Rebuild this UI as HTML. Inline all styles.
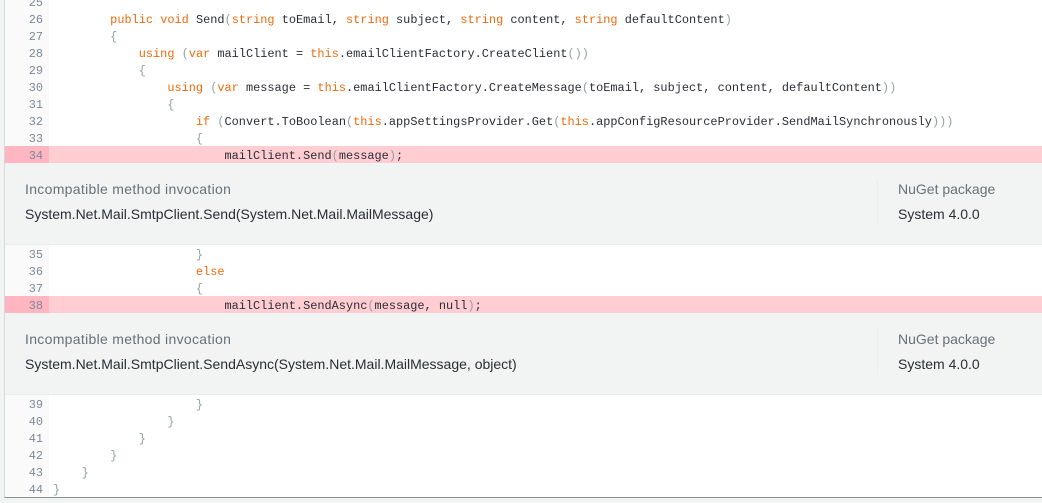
<!DOCTYPE html>
<html><head><meta charset="utf-8"><style>
html,body{margin:0;padding:0;width:1042px;height:503px;overflow:hidden;background:#f2f3f3}
#c{position:absolute;left:4px;top:0;width:1038px;height:497px;background:#fff;border-left:1px solid #d5dbdb;border-bottom:1px solid #879596;box-sizing:content-box}
#g{position:absolute;left:5px;top:0;width:44px;height:497px;background:#fafafa}
.l{position:absolute;left:5px;width:1037px;height:17px;font:11.915px/21px "Liberation Mono",monospace;color:#2a2e33;white-space:pre;overflow:hidden}
.l i{font-style:normal;position:absolute;left:0;top:0;width:38px;height:17px;text-align:right;color:#7d8998}
.l span{position:absolute;left:48px;top:0}
.p{background:#ffcdd2}
.p i{background:#ffb6c0;width:44px;padding-right:6px;box-sizing:border-box;height:17px}
b{font-weight:normal;color:#ec6a0c}
u{text-decoration:none;color:#95a1a2}
.b{position:absolute;left:5px;width:1037px;height:82px;background:#f2f3f3;border-bottom:1px solid #eaeded;box-sizing:border-box;font:14px/18px "Liberation Sans",sans-serif;color:#2a2e33}
.b div{position:absolute;white-space:nowrap}
.b .t{color:#687078}
.v{position:absolute;left:872px;top:16px;width:1px;height:45px;background:#eaeded}
</style></head><body>
<div id="c"></div><div id="g"></div>
<div class="l" style="top:0;height:10px;line-height:7px"><i style="height:10px">25</i></div>
<div class="l" style="top:10px"><i>26</i><span>        <b>public</b> <b>void</b> Send<u>(</u><b>string</b> toEmail, <b>string</b> subject, <b>string</b> content, <b>string</b> defaultContent<u>)</u></span></div>
<div class="l" style="top:27px"><i>27</i><span>        <u>{</u></span></div>
<div class="l" style="top:44px"><i>28</i><span>            <b>using</b> <u>(</u><b>var</b> mailClient = <b>this</b>.emailClientFactory.CreateClient<u>())</u></span></div>
<div class="l" style="top:61px"><i>29</i><span>            <u>{</u></span></div>
<div class="l" style="top:78px"><i>30</i><span>                <b>using</b> <u>(</u><b>var</b> message = <b>this</b>.emailClientFactory.CreateMessage<u>(</u>toEmail, subject, content, defaultContent<u>))</u></span></div>
<div class="l" style="top:95px"><i>31</i><span>                <u>{</u></span></div>
<div class="l" style="top:112px"><i>32</i><span>                    <b>if</b> <u>(</u>Convert.ToBoolean<u>(</u><b>this</b>.appSettingsProvider.Get<u>(</u><b>this</b>.appConfigResourceProvider.SendMailSynchronously<u>)))</u></span></div>
<div class="l" style="top:129px"><i>33</i><span>                    <u>{</u></span></div>
<div class="l p" style="top:146px"><i>34</i><span>                        mailClient.Send<u>(</u>message<u>)</u>;</span></div>
<div class="b" style="top:163px">
<div class="t" style="left:20px;top:17px;letter-spacing:.31px">Incompatible method invocation</div>
<div style="left:20px;top:42px">System.Net.Mail.SmtpClient.Send(System.Net.Mail.MailMessage)</div>
<div class="v"></div>
<div class="t" style="left:893px;top:17px">NuGet package</div>
<div style="left:893px;top:42px">System 4.0.0</div>
</div>
<div class="l" style="top:245px"><i>35</i><span>                    <u>}</u></span></div>
<div class="l" style="top:262px"><i>36</i><span>                    <b>else</b></span></div>
<div class="l" style="top:279px"><i>37</i><span>                    <u>{</u></span></div>
<div class="l p" style="top:296px"><i>38</i><span>                        mailClient.SendAsync<u>(</u>message, null<u>)</u>;</span></div>
<div class="b" style="top:313px">
<div class="t" style="left:20px;top:17px;letter-spacing:.31px">Incompatible method invocation</div>
<div style="left:20px;top:42px">System.Net.Mail.SmtpClient.SendAsync(System.Net.Mail.MailMessage, object)</div>
<div class="v"></div>
<div class="t" style="left:893px;top:17px">NuGet package</div>
<div style="left:893px;top:42px">System 4.0.0</div>
</div>
<div class="l" style="top:395px"><i>39</i><span>                    <u>}</u></span></div>
<div class="l" style="top:412px"><i>40</i><span>                <u>}</u></span></div>
<div class="l" style="top:429px"><i>41</i><span>            <u>}</u></span></div>
<div class="l" style="top:446px"><i>42</i><span>        <u>}</u></span></div>
<div class="l" style="top:463px"><i>43</i><span>    <u>}</u></span></div>
<div class="l" style="top:480px"><i>44</i><span><u>}</u></span></div>
</body></html>
